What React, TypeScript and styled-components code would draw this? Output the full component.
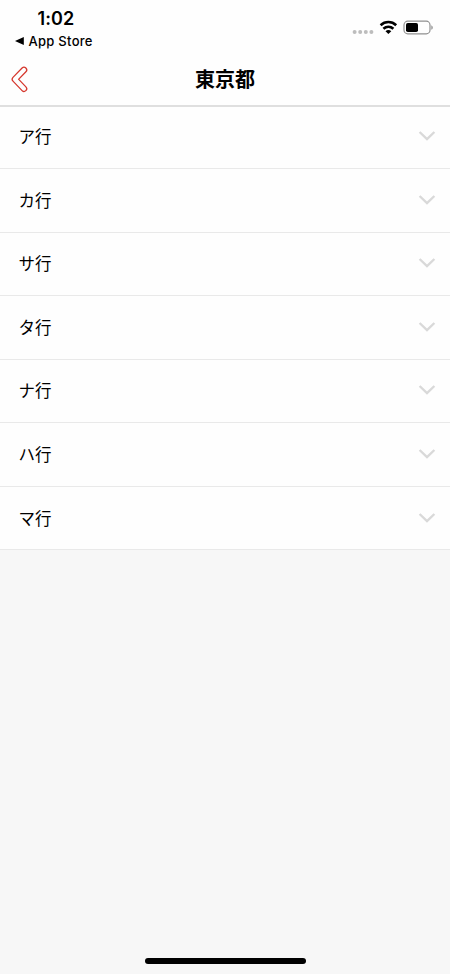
import React from "react";
import styled, { createGlobalStyle } from "styled-components";

const GlobalStyle = createGlobalStyle`
  * { box-sizing: border-box; }
  body { margin: 0; background: #f7f7f7; }
`;

const Screen = styled.div`
  display: flex;
  flex-direction: column;
  width: 450px;
  height: 974px;
  overflow: hidden;
  background: #f7f7f7;
  color: #000;
  font-family: Inter, "Noto Sans CJK JP", sans-serif;
`;

const Header = styled.header`
  height: 107px;
  flex: none;
  background: #fefefe;
  border-bottom: 2px solid #dfdfdf;
`;

const StatusBar = styled.div`
  display: flex;
  justify-content: space-between;
  height: 54px;
`;

const StatusLeft = styled.div`
  padding: 9px 0 0 15px;
`;

const Clock = styled.div`
  padding-left: 22.5px;
  font-size: 18px;
  line-height: 20px;
  font-weight: 600;
  letter-spacing: 0.1px;
`;

const ReturnLink = styled.div`
  display: flex;
  align-items: center;
  gap: 4.5px;
  margin-top: 3px;
  font-size: 13px;
  line-height: 18px;
  font-weight: 500;
  letter-spacing: 0.28px;
`;

const StatusIcons = styled.div`
  display: flex;
  align-items: center;
  height: 54px;
  padding-right: 16px;
`;

const NavBar = styled.nav`
  display: grid;
  grid-template-columns: 60px 1fr 60px;
  align-items: center;
  height: 50px;
`;

const BackButton = styled.button`
  display: flex;
  padding: 0 0 0 10px;
  border: 0;
  background: none;
`;

const Title = styled.h1`
  margin: 0;
  text-align: center;
  font-family: "Noto Sans CJK JP", sans-serif;
  font-size: 20px;
  line-height: 28px;
  font-weight: 700;
`;

const List = styled.ul`
  margin: 0;
  padding: 0;
  list-style: none;
  flex: 1;
`;

const Row = styled.li<{ $first: boolean }>`
  display: flex;
  align-items: center;
  justify-content: space-between;
  height: ${(p) => (p.$first ? 62 : 63.55)}px;
  padding: 0 14px ${(p) => (p.$first ? 3 : 1)}px 18.5px;
  background: #fefefe;
  border-bottom: 1px solid #e9e9e9;
`;

const RowLabel = styled.span`
  font-family: "Noto Sans CJK JP", sans-serif;
  font-size: 16.5px;
  line-height: 24px;
`;

const HomeArea = styled.footer`
  display: flex;
  justify-content: center;
  height: 16px;
`;

const HomeIndicator = styled.div`
  width: 161px;
  height: 6px;
  border-radius: 3px;
  background: #000;
`;

const rows = ["ア行", "カ行", "サ行", "タ行", "ナ行", "ハ行", "マ行"];

const Chevron = () => (
  <svg width="18" height="12" viewBox="0 0 18 12" fill="none">
    <path d="M1.6 2 9 9l7.4-7" stroke="#d9d9d9" strokeWidth="2.4" />
  </svg>
);

const BackIcon = () => (
  <svg width="18" height="28" viewBox="0 0 18 28" fill="none" strokeLinecap="round" strokeLinejoin="round">
    <path d="M14 4.9 4.9 14.3l9.1 9.4" stroke="#d5362c" strokeWidth="6.6" />
    <path d="M14 4.9 4.9 14.3l9.1 9.4" stroke="#fefefe" strokeWidth="4.1" />
  </svg>
);

const StatusGlyphs = () => (
  <svg width="82" height="18" viewBox="352 18 82 18" fill="none">
    <g fill="#bdbdbd">
      <circle cx="354.6" cy="32.1" r="2" />
      <circle cx="360.2" cy="32.1" r="2" />
      <circle cx="365.8" cy="32.1" r="2" />
      <circle cx="371.4" cy="32.1" r="2" />
    </g>
    <g stroke="#000" strokeWidth="2.6">
      <path d="M380.6 25.2c4.5-4.2 11.1-4.2 15.6 0" />
      <path d="M383.4 28.8c3-2.7 7-2.7 10 0" />
    </g>
    <path d="M385.5 31.2c1.7-1.5 4.1-1.5 5.8 0l-2.9 2.8z" fill="#000" />
    <rect x="404" y="21.2" width="26" height="12.6" rx="3.8" stroke="#909090" strokeWidth="1.2" />
    <rect x="406" y="23" width="12" height="9" rx="1.8" fill="#000" />
    <path d="M431.3 25.2c2 .9 2 3.7 0 4.6z" fill="#929292" />
  </svg>
);

export default function App() {
  return (
    <>
      <GlobalStyle />
      <Screen>
        <Header>
          <StatusBar>
            <StatusLeft>
              <Clock>1:02</Clock>
              <ReturnLink>
                <svg width="9" height="8" viewBox="0 0 9 8">
                  <path d="M0 4 8.8 0v8z" fill="#000" />
                </svg>
                App Store
              </ReturnLink>
            </StatusLeft>
            <StatusIcons>
              <StatusGlyphs />
            </StatusIcons>
          </StatusBar>
          <NavBar>
            <BackButton aria-label="戻る">
              <BackIcon />
            </BackButton>
            <Title>東京都</Title>
          </NavBar>
        </Header>
        <List>
          {rows.map((label, i) => (
            <Row key={label} $first={i === 0}>
              <RowLabel>{label}</RowLabel>
              <Chevron />
            </Row>
          ))}
        </List>
        <HomeArea>
          <HomeIndicator />
        </HomeArea>
      </Screen>
    </>
  );
}
